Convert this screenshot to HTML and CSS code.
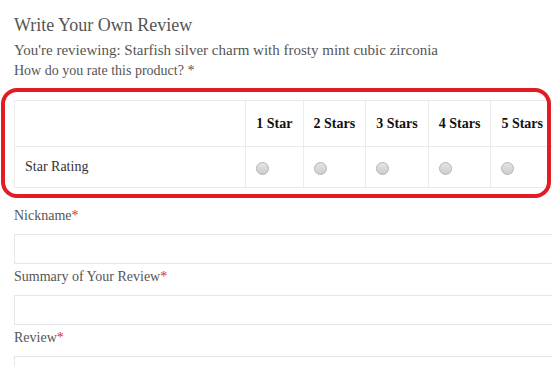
FILE: index.html
```html
<!DOCTYPE html>
<html lang="en">
<head>
  <meta charset="UTF-8" />
  <title>Write Your Own Review</title>
  <link rel="stylesheet" href="styles.css">
</head>
<body>
  <div class="review-form">
    <h2>Write Your Own Review</h2>
    <p class="reviewing">You're reviewing: Starfish silver charm with frosty mint cubic zirconia</p>
    <p class="rate-prompt">How do you rate this product? *</p>

    <div class="rating-wrap">
      <table class="rating-table">
        <thead>
          <tr>
            <th class="label-col"></th>
            <th>1 Star</th>
            <th>2 Stars</th>
            <th>3 Stars</th>
            <th>4 Stars</th>
            <th>5 Stars</th>
          </tr>
        </thead>
        <tbody>
          <tr>
            <td class="label-col">Star Rating</td>
            <td><input type="radio" name="rating" value="1"></td>
            <td><input type="radio" name="rating" value="2"></td>
            <td><input type="radio" name="rating" value="3"></td>
            <td><input type="radio" name="rating" value="4"></td>
            <td><input type="radio" name="rating" value="5"></td>
          </tr>
        </tbody>
      </table>
      <div class="highlight"></div>
    </div>

    <label class="field-label">Nickname<em>*</em></label>
    <input class="field" type="text">

    <label class="field-label">Summary of Your Review<em>*</em></label>
    <input class="field" type="text">

    <label class="field-label">Review<em>*</em></label>
    <textarea class="field area"></textarea>
  </div>
</body>
</html>
```

FILE: styles.css
```css
html, body {
  overflow: hidden;
}

body {
  margin: 0;
  background: #fff;
  font-family: "Liberation Serif", "Times New Roman", serif;
  color: #555;
}

.review-form {
  width: 540px;
  padding: 0 14px;
}

.review-form h2 {
  margin: 14px 0 0;
  font-size: 18px;
  line-height: 22px;
  font-weight: normal;
  color: #555;
}

.reviewing {
  margin: 4px 0 0;
  font-size: 15px;
  line-height: 20px;
}

.rate-prompt {
  margin: 1px 0 0;
  font-size: 14px;
  line-height: 20px;
}

.rating-wrap {
  position: relative;
  margin: 19px 0 18px;
}

.rating-table {
  width: 100%;
  border-collapse: collapse;
  font-size: 14px;
}

.rating-table th,
.rating-table td {
  border: 1px solid #ebebeb;
  padding: 0 10px;
  text-align: left;
  white-space: nowrap;
}

.rating-table th {
  height: 45px;
  font-weight: bold;
  color: #111;
}

.rating-table td {
  height: 40px;
  color: #333;
}

.rating-table .label-col {
  width: 100%;
}

.rating-table input[type="radio"] {
  appearance: none;
  -webkit-appearance: none;
  display: block;
  margin: 3px 0 0;
  width: 13px;
  height: 13px;
  border: 1px solid #b5b5b5;
  border-radius: 50%;
  background: linear-gradient(#e4e4e4, #cdcdcd);
}

/* red annotation ring drawn over the rating table */
.highlight {
  position: absolute;
  left: -13px;
  top: -12px;
  width: 542px;
  height: 102px;
  border: 4px solid #e31b24;
  border-radius: 16px;
  pointer-events: none;
}

.field-label {
  display: block;
  font-size: 14px;
  line-height: 20px;
  color: #555;
}

.field-label em {
  font-style: normal;
  color: #e02b27;
}

.field {
  display: block;
  box-sizing: border-box;
  width: 100%;
  height: 30px;
  margin: 8px 0 3px;
  border: 1px solid #e6e6e6;
  background: #fff;
}

.area {
  height: 80px;
  resize: none;
}
```
